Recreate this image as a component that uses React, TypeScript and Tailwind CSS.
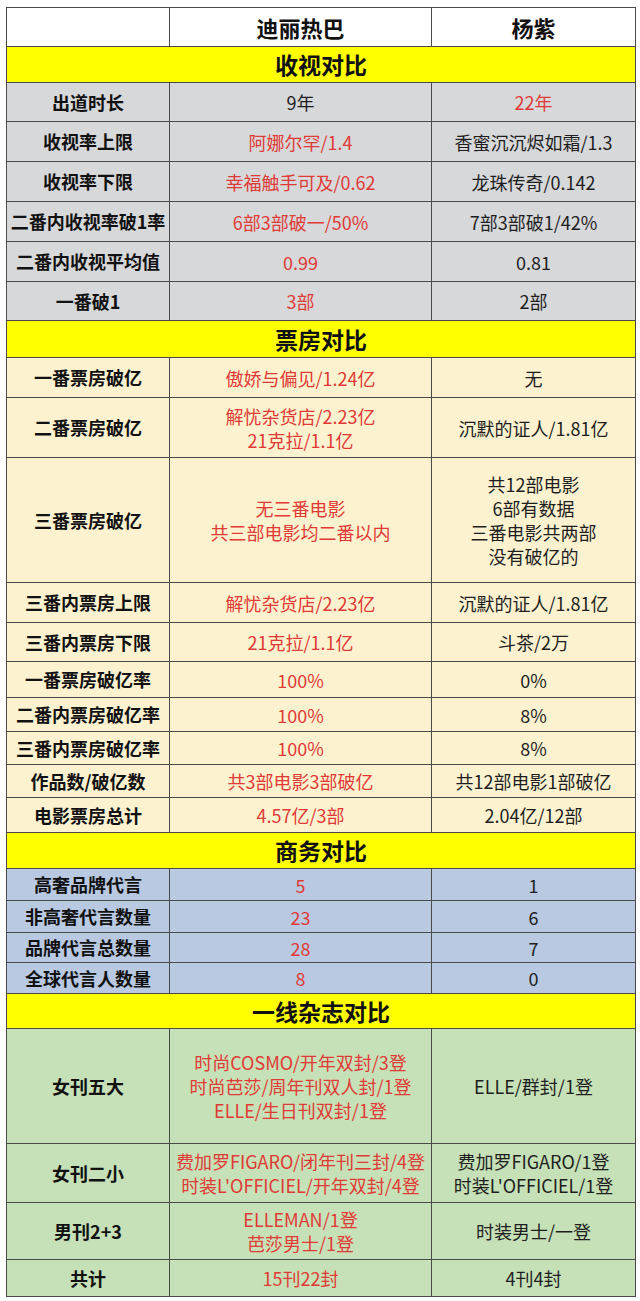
type Row = {
  label: string;
  a: string[];
  b: string[];
  h: string;
  swap?: boolean;
};

type Section = {
  title: string;
  titleH: string;
  bg: string;
  rows: Row[];
};

const sections: Section[] = [
  {
    title: "收视对比",
    titleH: "h-[36px]",
    bg: "bg-[#d7d8da]",
    rows: [
      { label: "出道时长", a: ["9年"], b: ["22年"], h: "h-[39px]", swap: true },
      { label: "收视率上限", a: ["阿娜尔罕/1.4"], b: ["香蜜沉沉烬如霜/1.3"], h: "h-[40px]" },
      { label: "收视率下限", a: ["幸福触手可及/0.62"], b: ["龙珠传奇/0.142"], h: "h-[40px]" },
      { label: "二番内收视率破1率", a: ["6部3部破一/50%"], b: ["7部3部破1/42%"], h: "h-[40px]" },
      { label: "二番内收视平均值", a: ["0.99"], b: ["0.81"], h: "h-[40px]" },
      { label: "一番破1", a: ["3部"], b: ["2部"], h: "h-[39px]" },
    ],
  },
  {
    title: "票房对比",
    titleH: "h-[37px]",
    bg: "bg-[#fcf2d0]",
    rows: [
      { label: "一番票房破亿", a: ["傲娇与偏见/1.24亿"], b: ["无"], h: "h-[40px]" },
      { label: "二番票房破亿", a: ["解忧杂货店/2.23亿", "21克拉/1.1亿"], b: ["沉默的证人/1.81亿"], h: "h-[60px]" },
      {
        label: "三番票房破亿",
        a: ["无三番电影", "共三部电影均二番以内"],
        b: ["共12部电影", "6部有数据", "三番电影共两部", "没有破亿的"],
        h: "h-[125px]",
      },
      { label: "三番内票房上限", a: ["解忧杂货店/2.23亿"], b: ["沉默的证人/1.81亿"], h: "h-[40px]" },
      { label: "三番内票房下限", a: ["21克拉/1.1亿"], b: ["斗茶/2万"], h: "h-[39px]" },
      { label: "一番票房破亿率", a: ["100%"], b: ["0%"], h: "h-[36px]" },
      { label: "二番内票房破亿率", a: ["100%"], b: ["8%"], h: "h-[34px]" },
      { label: "三番内票房破亿率", a: ["100%"], b: ["8%"], h: "h-[33px]" },
      { label: "作品数/破亿数", a: ["共3部电影3部破亿"], b: ["共12部电影1部破亿"], h: "h-[33px]" },
      { label: "电影票房总计", a: ["4.57亿/3部"], b: ["2.04亿/12部"], h: "h-[35px]" },
    ],
  },
  {
    title: "商务对比",
    titleH: "h-[36px]",
    bg: "bg-[#b8c9e1]",
    rows: [
      { label: "高奢品牌代言", a: ["5"], b: ["1"], h: "h-[32px]" },
      { label: "非高奢代言数量", a: ["23"], b: ["6"], h: "h-[32px]" },
      { label: "品牌代言总数量", a: ["28"], b: ["7"], h: "h-[30px]" },
      { label: "全球代言人数量", a: ["8"], b: ["0"], h: "h-[31px]" },
    ],
  },
  {
    title: "一线杂志对比",
    titleH: "h-[35px]",
    bg: "bg-[#c6e1b7]",
    rows: [
      {
        label: "女刊五大",
        a: ["时尚COSMO/开年双封/3登", "时尚芭莎/周年刊双人封/1登", "ELLE/生日刊双封/1登"],
        b: ["ELLE/群封/1登"],
        h: "h-[115px]",
      },
      {
        label: "女刊二小",
        a: ["费加罗FIGARO/闭年刊三封/4登", "时装L'OFFICIEL/开年双封/4登"],
        b: ["费加罗FIGARO/1登", "时装L'OFFICIEL/1登"],
        h: "h-[59px]",
      },
      { label: "男刊2+3", a: ["ELLEMAN/1登", "芭莎男士/1登"], b: ["时装男士/一登"], h: "h-[57px]" },
      { label: "共计", a: ["15刊22封"], b: ["4刊4封"], h: "h-[36px]" },
    ],
  },
];

const RED = "text-[#e03a36]";
const DARK = "text-[#1e1e1e]";

const Lines = ({ lines, className }: { lines: string[]; className: string }) => (
  <div className={`flex flex-col items-center justify-center text-center text-[18px] leading-[24px] ${className}`}>
    {lines.map((l, i) => (
      <span key={i} className="whitespace-nowrap">
        {l}
      </span>
    ))}
  </div>
);

export default function App() {
  return (
    <div
      className="min-h-[1301px] bg-white pl-[6px] pt-[7px]"
      style={{ fontFamily: '"Noto Sans CJK SC", "Noto Sans", sans-serif' }}
    >
      <div className="w-[630px] border border-[#4a4a4a]">
        <div className="grid h-[39px] grid-cols-[163px_262px_1fr] border-b border-[#4a4a4a] bg-white">
          <div className="border-r border-[#4a4a4a]" />
          <div className="flex items-center justify-center border-r border-[#4a4a4a] text-[22px] font-bold text-[#111]">
            迪丽热巴
          </div>
          <div className="flex items-center justify-center text-[22px] font-bold text-[#111]">杨紫</div>
        </div>

        {sections.map((s, si) => (
          <div key={s.title}>
            <div
              className={`flex items-center justify-center border-b border-[#4a4a4a] bg-[#ffff00] text-[23px] font-bold text-[#111] ${s.titleH}`}
            >
              {s.title}
            </div>
            {s.rows.map((r, ri) => {
              const last = si === sections.length - 1 && ri === s.rows.length - 1;
              return (
                <div
                  key={r.label}
                  className={`grid grid-cols-[163px_262px_1fr] ${s.bg} ${r.h} ${last ? "" : "border-b border-[#4a4a4a]"}`}
                >
                  <div className="flex items-center justify-center whitespace-nowrap border-r border-[#4a4a4a] text-[18px] font-bold text-[#111]">
                    {r.label}
                  </div>
                  <Lines lines={r.a} className={`border-r border-[#4a4a4a] ${r.swap ? DARK : RED}`} />
                  <Lines lines={r.b} className={r.swap ? RED : DARK} />
                </div>
              );
            })}
          </div>
        ))}
      </div>
    </div>
  );
}
